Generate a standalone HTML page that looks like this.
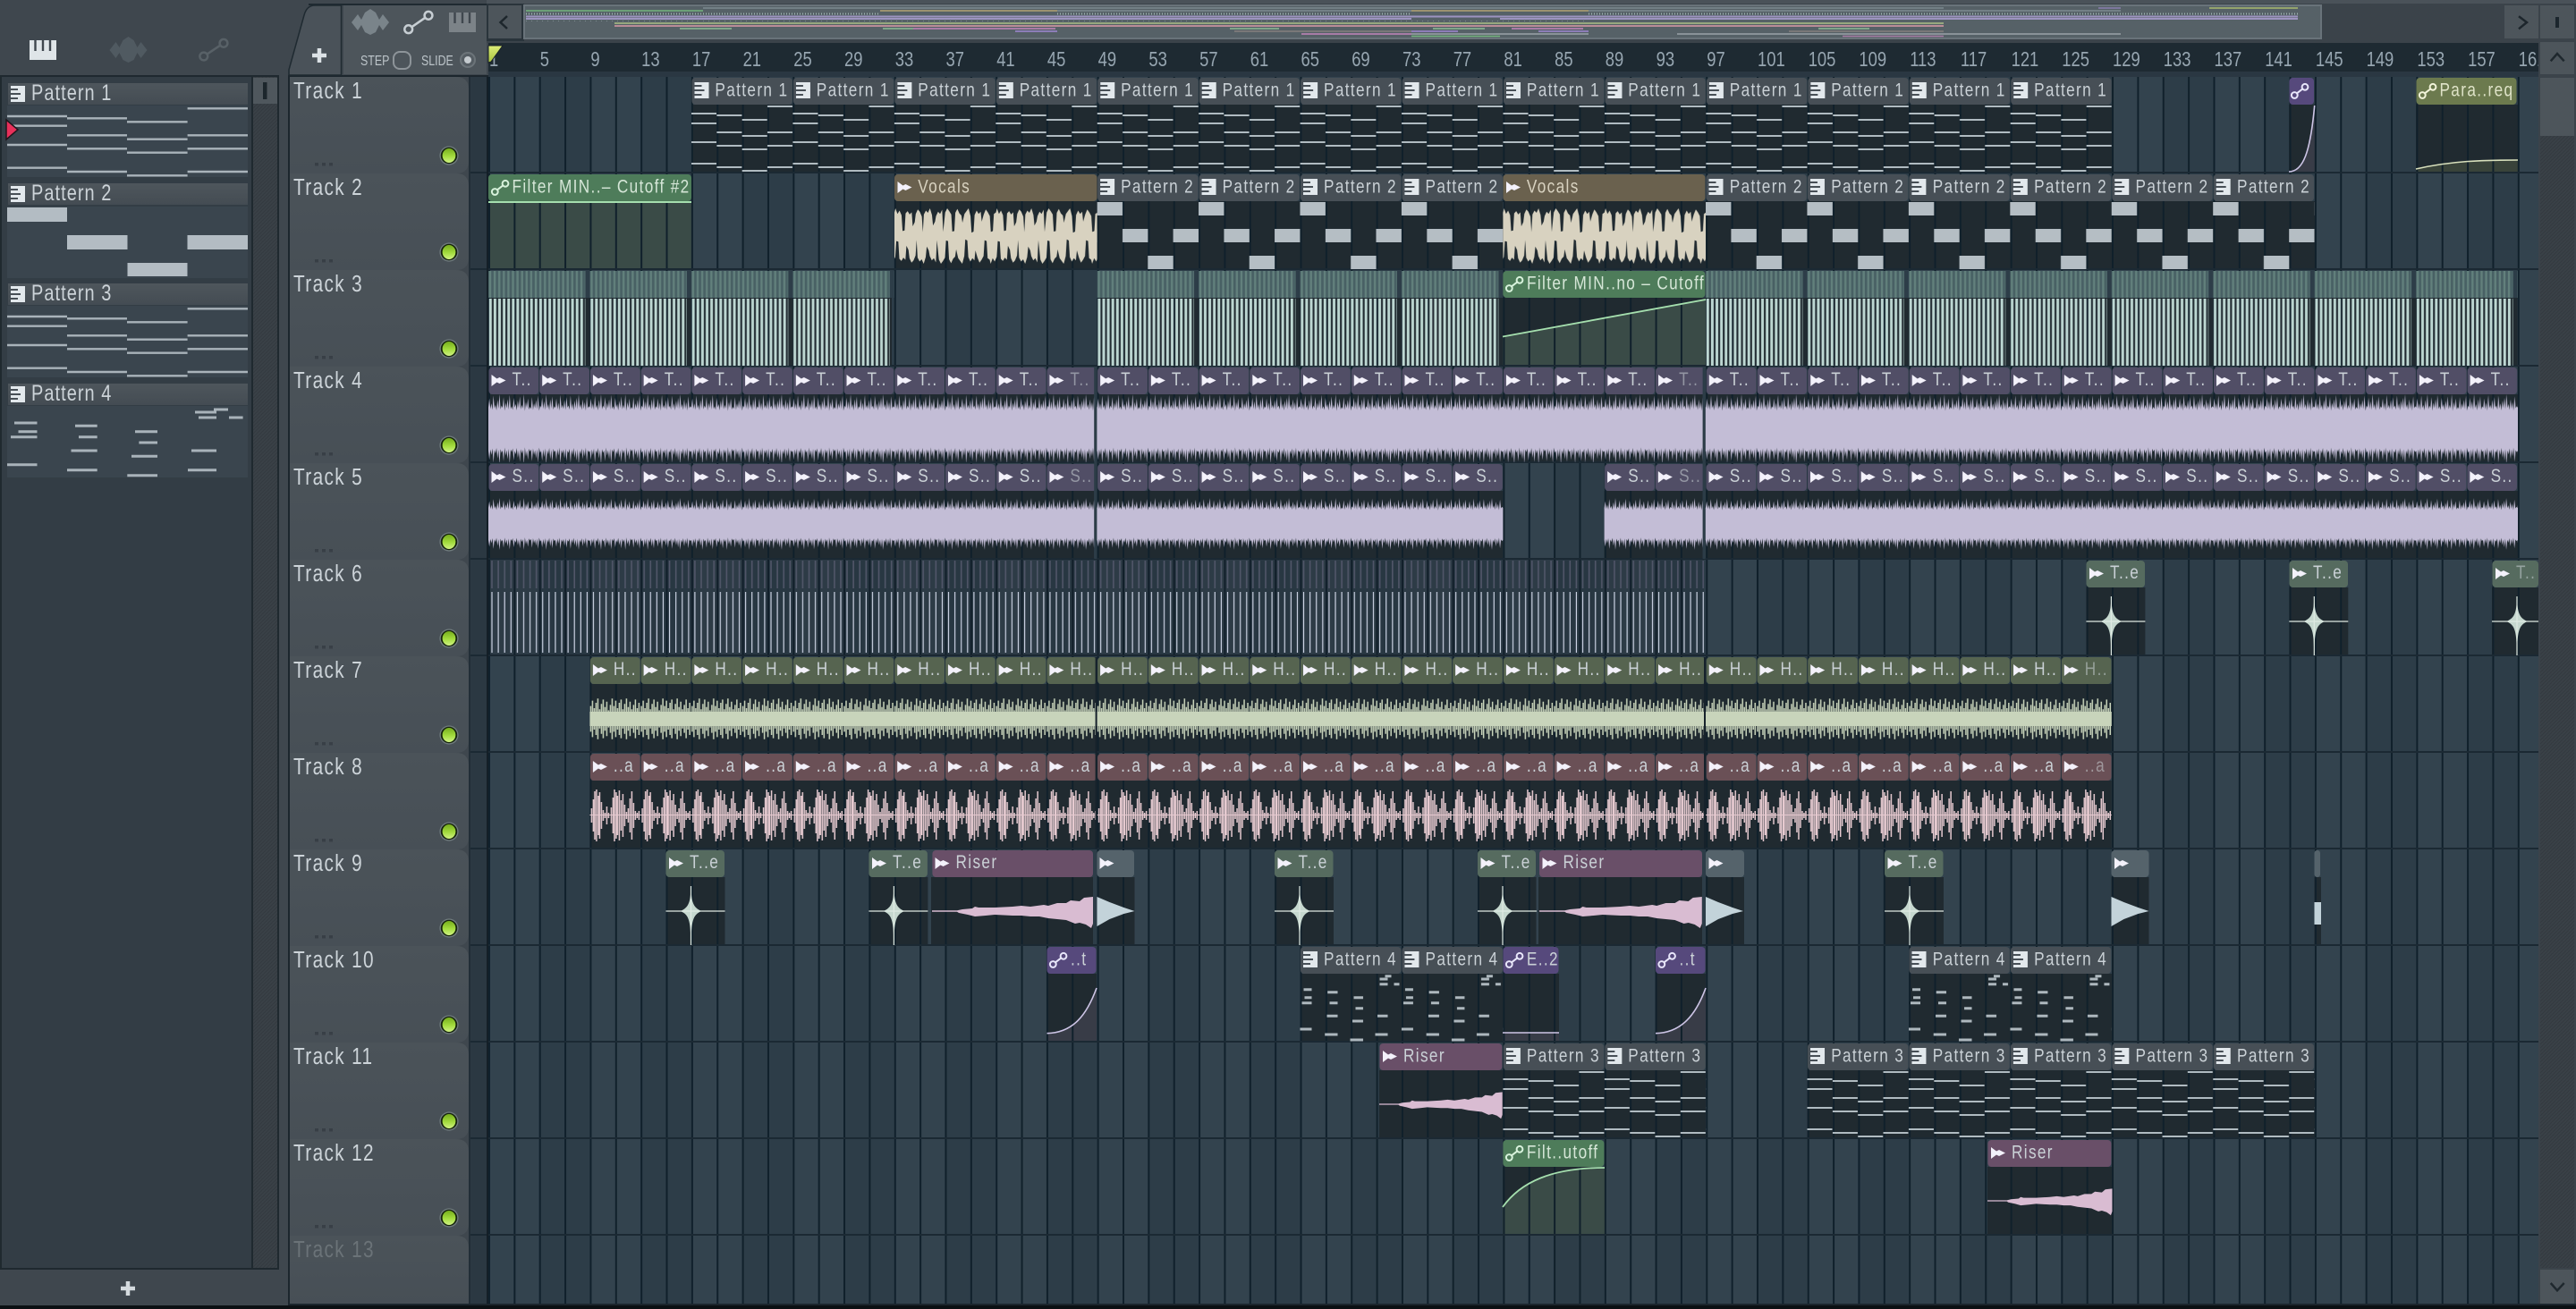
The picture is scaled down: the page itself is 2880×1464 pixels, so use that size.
<!DOCTYPE html>
<html><head><meta charset="utf-8"><title>Playlist</title>
<style>
html,body{margin:0;padding:0;background:#0d1215;width:2880px;height:1464px;overflow:hidden}
svg{display:block;position:absolute;left:0;top:0}
text{font-family:"Liberation Sans",sans-serif;transform-box:fill-box;transform-origin:0 0;transform:scaleX(.8)}
.p text{font-size:21.5px;letter-spacing:1.7px;fill:#cad1d6}
.p text.d{fill-opacity:.55}
.k text{font-size:26px;letter-spacing:1.7px;fill:#cdd4d9}
.n text{font-size:25px;letter-spacing:1.3px;fill:#ccd3d8}
.r text{font-size:23px;fill:#97a6b1}
.s text{font-size:15.5px;fill:#bcc4c9}
</style></head><body>
<svg width="2880" height="1464" viewBox="0 0 2880 1464" xmlns="http://www.w3.org/2000/svg">
<defs>
<linearGradient id="hd" x1="0" y1="0" x2="0" y2="1"><stop offset="0" stop-color="#4b5359"/><stop offset="1" stop-color="#474f56"/></linearGradient>
<linearGradient id="ph" x1="0" y1="0" x2="0" y2="1"><stop offset="0" stop-color="#4e565c"/><stop offset="1" stop-color="#444c53"/></linearGradient>
<linearGradient id="led" x1="0" y1="0" x2="0" y2="1"><stop offset="0" stop-color="#76ad1c"/><stop offset=".55" stop-color="#a3dc3e"/><stop offset="1" stop-color="#d0f283"/></linearGradient>
<linearGradient id="mk" x1="0" y1="0" x2="0" y2="1"><stop offset="0" stop-color="#dcec78"/><stop offset="1" stop-color="#a9c53e"/></linearGradient>
<pattern id="hat" width="4" height="4" patternUnits="userSpaceOnUse"><rect width="4" height="4" fill="#3a4147"/><path d="M-1 1L1-1M0 4L4 0M3 5L5 3" stroke="#33393f" stroke-width="1"/></pattern>
<pattern id="band" width="113.44" height="10" patternUnits="userSpaceOnUse"><rect width="113.44" height="10" fill="#2d3d48"/><rect width="56.72" height="10" fill="#33434e"/></pattern>
<pattern id="vl" width="28.36" height="10" patternUnits="userSpaceOnUse"><rect width="2" height="10" fill="#10202b"/></pattern>
<path id="ip" d="M0 0h16v18H0z" fill="#e2e8ec"/>
<path id="ipl" d="M0 4h8M0 9h11M0 14h8" stroke="#474f56" stroke-width="2"/>
<path id="ia" d="M0 0L6 4.5 9 3 16 6.5 9 10 6 8.5 0 13Z" fill="#f3f1fa"/>
<g id="iau" fill="none" stroke="currentColor" stroke-width="2"><circle cx="6.3" cy="19.5" r="3.4"/><circle cx="18" cy="10.3" r="3.4"/><path d="M9 17.3L15.3 12.4"/></g>
<pattern id="hP" width="113.44" height="31" patternUnits="userSpaceOnUse"><rect x=".5" width="112.4" height="30" rx="4" fill="#474f56"/><use href="#ip" x="3.5" y="5"/><use href="#ipl" x="3.5" y="5"/></pattern>
<pattern id="h4" width="56.72" height="31" patternUnits="userSpaceOnUse"><rect x=".5" width="55.7" height="30" rx="4" fill="#514e66"/><use href="#ia" x="3.5" y="8"/></pattern>
<pattern id="h7" width="56.72" height="31" patternUnits="userSpaceOnUse"><rect x=".5" width="55.7" height="30" rx="4" fill="#566450"/><use href="#ia" x="3.5" y="8"/></pattern>
<pattern id="h8" width="56.72" height="31" patternUnits="userSpaceOnUse"><rect x=".5" width="55.7" height="30" rx="4" fill="#6a5056"/><use href="#ia" x="3.5" y="8"/></pattern>
<pattern id="bP1" width="113.44" height="76" patternUnits="userSpaceOnUse"><path stroke="#b0bbc1" stroke-width="2" d="M0 10h28M0 21h28M0 42h28M0 66h28M28.4 12h28M28.4 31h28M28.4 46h28M28.4 70h28M56.7 17h28M56.7 35h28M56.7 50h28M56.7 74h28M85 2h28M85 31h28M85 46h28M85 70h28"/></pattern>
<pattern id="bP2" width="113.44" height="76" patternUnits="userSpaceOnUse"><path fill="#b5bec4" d="M0 1h28.4v15H0zM28.4 31h28.4v15H28.4zM56.7 61h28.4v15H56.7zM85 31h28.4v15H85z"/></pattern>
<pattern id="bP4" width="113.44" height="76" patternUnits="userSpaceOnUse"><path stroke="#aeb8be" stroke-width="3" d="M4 17.7H13M5 26.7H13M2 32.7H13M0 62H13M30.7 20.7H42M33 32.7H42M30 47.3H42M27.7 68H42M60 26.7H70.5M62 38.7H70.5M58.5 53H70.5M56 74H70.5M95 2.7H102M89 6H98M89 11.7H98M105 11.7H111M86.5 47.3H98M84 68H98"/></pattern>
<pattern id="st1" width="5.1" height="76" patternUnits="userSpaceOnUse"><rect x=".8" width="3" height="76" fill="#bdd7d2"/></pattern>
<pattern id="st2" width="5.1" height="30" patternUnits="userSpaceOnUse"><rect width="5.1" height="30" fill="#486064"/><rect x=".8" width="2.4" height="30" fill="#62807c"/></pattern>
<pattern id="t3b" width="113.44" height="76" patternUnits="userSpaceOnUse"><rect width="108.4" height="76" fill="url(#st1)"/></pattern>
<pattern id="t3h" width="113.44" height="30" patternUnits="userSpaceOnUse"><rect width="108.4" height="30" fill="url(#st2)"/></pattern>
<pattern id="t6" width="56.72" height="108" patternUnits="userSpaceOnUse"><path stroke="#515669" stroke-width="1.6" d="M4 1V32M11.1 1V32M18.2 1V32M25.3 1V32M32.4 1V32M39.5 1V32M46.6 1V32M53.7 1V32"/><path stroke="#ccd3e4" stroke-width="1.2" d="M4 36V104M11.1 36V104M18.2 36V104M25.3 36V104M32.4 36V104M39.5 36V104M46.6 36V104M53.7 36V104"/></pattern>
<path id="s1" d="M0 0V-62L1-88 2-58 3-74 4-55 5-96 6-60 7-70 8-54 9-84 10-59 11-100 12-57 13-68 14-61 15-92 16-53 17-76 18-60 19-86 20-56 21-98 22-58 23-66 24-55 25-90 26-62 27-72 28-54 29-82 30-60 31-94 32-57 33-70 34-59 35-100 36-52 37-78 38-61 39-88 40-56 41-64 42-58 43-92 44-55 45-74 46-60 47-84 48-57 49-96 50-53 51-68 52-62 53-90 54-58 55-80 56-55 57-100 58-60 59-72 60-54 61-86 62-59 63-94 64-56 65-66 66-61 67-88 68-57 69-76 70-53 71-98 72-60 73-70 74-58 75-84 76-55 77-92 78-62 79-68 80-56 81-96 82-59 83-74 84-54 85-82 86-60 87-90 88-57 89-100 90-61 91-72 92-55 93-86 94-58 95-78 96-53 97-94 98-60 99-66 100-62V0Z"/>
<path id="s4" d="M0 0V-85L1-100 3-80 5-92 7-75 8-18 10-20 11-82 13-90 15-78 17-86 18-35 20-50 21-80 23-96 25-88 27-70 28-14 29-78 31-92 33-84 35-100 37-76 38-38 40-52 41-72 43-88 45-80 47-95 48-15 50-85 52-100 54-90 56-78 57-16 59-18 60-84 62-98 64-82 66-74 67-48 69-80 71-90 73-100 75-72 76-12 78-16 79-76 81-92 83-80 85-88 86-52 88-78 90-96 92-86 94-72 95-15 97-18 98-80 100-85V0Z"/>
<pattern id="w4" width="113.44" height="76" patternUnits="userSpaceOnUse"><g fill="#c3bdd6"><use href="#s1" transform="translate(0,39) scale(1.1344,.39)"/><use href="#s1" transform="translate(0,39) scale(1.1344,-.39)"/></g></pattern>
<pattern id="w5" width="113.44" height="76" patternUnits="userSpaceOnUse"><g fill="#c3bdd6"><use href="#s1" transform="translate(0,37) scale(1.1344,.29)"/><use href="#s1" transform="translate(0,37) scale(1.1344,-.29)"/></g></pattern>
<pattern id="w7" width="56.72" height="76" patternUnits="userSpaceOnUse"><rect y="31" width="56.72" height="16" fill="#c8d4bb"/><path transform="translate(0,39) scale(1,1.2) translate(0,-39)" stroke="#c8d4bb" stroke-width="1.5" d="M1 27V51M3 22V56M5 29V49M7 24V54M9 20V58M11 30V48M13 25V53M15 21V57M17 28V50M19 23V55M21 31V47M23 26V52M25 20V58M27 27V51M29 22V56M31 29V49M33 24V54M35 21V57M37 30V48M39 25V53M41 20V58M43 28V50M45 23V55M47 30V48M49 26V52M51 21V57M53 29V49M55 24V54"/></pattern>
<pattern id="w8" width="56.72" height="76" patternUnits="userSpaceOnUse"><path stroke="#e2c4cb" stroke-width="1" d="M0 38.5H56.72" /><path stroke="#e6cad0" stroke-width="1.5" d="M2 31V47M4 21V57M5.6 12V66M7.5 10V68M9.5 17V61M11 13V65M13 24V54M15 33V45M17 36V42M19 29V49M21 36V42M24 30V48M26 19V59M27.6 10V68M29.5 13V65M31 17V61M33 11V67M35 22V56M37 15V63M39 27V51M41 35V43M43 31V47M45 20V58M47 12V66M49 25V53M51 34V44M53 36V42M55 34V44"/></pattern>
<pattern id="wv" width="113.44" height="76" patternUnits="userSpaceOnUse"><g fill="#d8d2c0"><use href="#s4" transform="translate(0,39) scale(1.1344,.31)"/><use href="#s4" transform="translate(-7,39) scale(1.1344,-.31)"/><use href="#s4" transform="translate(106.44,39) scale(1.1344,-.31)"/></g></pattern>
<g id="star"><path d="M0-28C.5-12 1.5-4 12 0 1.5 4 .5 12 0 38-.5 12-1.5 4-12 0-1.5-4-.5-12 0-28Z" fill="#c6d8cf"/><path d="M-28 0H38M0-28V38" stroke="#dfeae3" stroke-width="1.2"/></g>
<path id="ris" d="M0-.7H28L34-2 45-3 48-5 52-4 70-4 90-5 100-6 110-5 125-7 130-6 140-9 150-9 155-12 165-11 170-15 180-16V14L178 19 172 15 165 13 160 14 150 10 140 9 130 8 120 6 110 6 100 5 90 5 70 4 60 5 48 6 40 4 30 2 28 .7H0Z" fill="#d9bcd2"/>
<path id="tail" d="M0-16L14-10 30-4 42 0 30 3 14 9 0 17Z" fill="#c3d3da"/>
<path id="wf" d="M-21 0L-14-9-10-3-6-11 0-15 6-11 10-3 14-9 21 0 14 9 10 3 6 11 0 14-6 11-10 3-14 9Z"/>
<g id="pi"><rect width="30" height="22" fill="currentColor"/><path d="M6.5 0v12M15 0v12M23 0v12" stroke="#3f474e" stroke-width="2.4"/></g>
<g id="th"><path d="M0 0H186Q200 0 200 14V94Q200 108 186 108H0Z" fill="url(#hd)"/><rect x="28" y="96" width="4" height="3.5" fill="#383f46"/><rect x="36" y="96" width="4" height="3.5" fill="#383f46"/><rect x="44" y="96" width="4" height="3.5" fill="#383f46"/><circle cx="178" cy="88" r="10.6" fill="#6f7a7d"/><circle cx="178" cy="88" r="9.2" fill="#15230c"/><ellipse cx="178" cy="88" rx="7.4" ry="8" fill="url(#led)"/></g>
<path id="pn" stroke="#a9b3ba" stroke-width="2.4" d="M8 130H75M8 140.7H75M8 162H75M8 187.7H75M75 132.3H142M75 151.3H142M75 166.3H142M75 192H142M142 136.3H209.6M142 155.7H209.6M142 170.7H209.6M142 196.3H209.6M209.6 121.3H277M209.6 151.3H277M209.6 166.3H277M209.6 192H277"/>
</defs>

<rect width="2880" height="1464" fill="#3f474e"/>

<!-- top-right frame -->
<rect x="544" width="2336" height="4" fill="#4a5259"/>
<rect x="544" y="4" width="2336" height="44" fill="#3b434a"/>

<!-- left icons -->
<use href="#pi" x="33" y="45" style="color:#dfe5e8"/>
<use href="#wf" transform="translate(143.5,56)" fill="#505a61"/>
<g fill="none" stroke="#586167" stroke-width="2.5"><circle cx="227.8" cy="63" r="4.4"/><circle cx="250" cy="48.3" r="4.4"/><path d="M231.5 60.6L246.3 50.7"/></g>

<!-- pattern panel -->
<rect x="0" y="84" width="312" height="1336" fill="#1f292f"/>
<rect x="2" y="86" width="279" height="1332" fill="#333d45"/>
<rect x="283" y="86" width="27" height="1332" fill="url(#hat)"/>
<rect x="283" y="87" width="27" height="29" fill="#4f575d"/>
<rect x="294" y="92" width="4.5" height="19" fill="#1c262c"/>
<rect x="0" y="1420" width="322" height="40" fill="#3f474e"/>
<path d="M135 1441h16M143 1433v16" stroke="#d4dade" stroke-width="4.5"/>

<g>
<rect x="8" y="118" width="269" height="80" fill="#3a454e"/><rect x="9" y="93" width="268" height="24" fill="url(#ph)"/>
<rect x="8" y="231" width="269" height="80" fill="#3a454e"/><rect x="9" y="205" width="268" height="24" fill="url(#ph)"/>
<rect x="8" y="342" width="269" height="80" fill="#3a454e"/><rect x="9" y="317" width="268" height="24" fill="url(#ph)"/>
<rect x="8" y="454" width="269" height="80" fill="#3a454e"/><rect x="9" y="429" width="268" height="24" fill="url(#ph)"/>
<use href="#ip" x="12" y="96"/><use href="#ipl" x="12" y="96"/>
<use href="#ip" x="12" y="208"/><use href="#ipl" x="12" y="208"/>
<use href="#ip" x="12" y="320"/><use href="#ipl" x="12" y="320"/>
<use href="#ip" x="12" y="432"/><use href="#ipl" x="12" y="432"/>
</g>
<g class="n"><text x="35" y="112">Pattern 1</text><text x="35" y="224">Pattern 2</text><text x="35" y="336">Pattern 3</text><text x="35" y="448">Pattern 4</text></g>
<use href="#pn"/><use href="#pn" y="224"/>
<path fill="#b3bcc3" d="M8 232h67v16H8zM75 263h67.5v16H75zM142.5 294h67v15h-67zM209.5 263h67.5v16h-67.5z"/>
<path stroke="#a9b3ba" stroke-width="3" d="M16 473H41.5M20.5 482.7H41.5M12 488.7H41.5M8 519.7H41.5M84 476.3H108.7M88 488.7H108.7M79.5 504H108.7M75 525.7H108.7M151 482.7H176M155.4 495H176M147 510.3H176M142.3 531.7H176M239 458H255M218 461H242M222 467H242M256 467H271.6M214 504H242M210 525.7H242"/>
<path d="M7 134L20 145 7 156Z" fill="#e8305a" stroke="#20161c" stroke-width="1.5"/>

<!-- grid -->
<rect x="526" y="86" width="20" height="1374" fill="#2b3842"/>
<g transform="translate(546,0)"><rect y="86" width="2292" height="1372" fill="url(#band)"/></g>

<!-- dark clip bodies -->
<path fill="#202a30" d="M773 117h1588v76H773zM2559 117h28.7v76H2559zM2701 117h114v76H2701zM1000 225h1588v76H1000zM546 333h451v76H546zM1226.6 333h1588v76H1226.6zM546 441h677v76H546zM1226.6 441h677v76H1226.6zM1907 441h908v76H1907zM546 549h677v76H546zM1226.6 549h453.6v76H1226.6zM1793.6 549h110v76H1793.6zM1907 549h908v76H1907zM2332.4 657h66v76H2332.4zM2559.3 657h66v76H2559.3zM2786 657h52v76H2786zM659.4 765h1701.4v76H659.4zM659.4 873h1701.4v76H659.4zM744.5 981h66v76H744.5zM971.4 981h66v76H971.4zM1041 981h181v76H1041zM1226.5 981h42v76H1226.5zM1425 981h66v76H1425zM1652 981h65.5v76H1652zM1720 981h183v76H1720zM1907 981h43v76H1907zM2107 981h66v76H2107zM2360.5 981h42v76H2360.5zM2587.5 981h7.5v76H2587.5zM1170.5 1089h55.5v76H1170.5zM1453.5 1089h289.5v76H1453.5zM1851 1089h56v76H1851zM2134 1089h227v76H2134zM1542 1197h365v76H1542zM2020.5 1197h567.5v76H2020.5zM1680 1305h114v76H1680zM2222 1305h139v76H2222z"/>
<!-- automation fills -->
<rect x="546" y="226" width="227" height="75" fill="#3a4b47"/>
<path d="M1680 376.5L1907 335V409H1680Z" fill="#3a4b47"/>
<path d="M1680 1350C1700 1322 1735 1306 1794 1306V1381H1680Z" fill="#3a4b47"/>
<path d="M2701 189C2740 180 2775 179 2815 179V193H2701Z" fill="#39433a"/>
<path d="M2559 192C2575 192 2583 170 2587.7 118V193H2559Z" fill="#383c47"/>
<path d="M1170.5 1155.7C1200 1155 1215 1135 1226 1105V1165H1170.5Z" fill="#383c47"/>
<path d="M1851 1155.7C1880 1155 1896 1135 1907 1105V1165H1851Z" fill="#383c47"/>
<rect x="1680" y="1155" width="63" height="10" fill="#383c47"/>

<!-- lines -->
<g transform="translate(546,0)"><rect y="86" width="2292" height="1372" fill="url(#vl)"/></g>
<path stroke="#1b2933" stroke-width="2" d="M526 193H2838M526 301H2838M526 409H2838M526 517H2838M526 625H2838M526 733H2838M526 841H2838M526 949H2838M526 1057H2838M526 1165H2838M526 1273H2838M526 1381H2838"/>
<rect x="544" y="86" width="2" height="1374" fill="#141f27"/>

<!-- track 1 -->
<rect transform="translate(773,117)" width="1588" height="76" fill="url(#bP1)"/>
<rect transform="translate(773,87)" width="1588" height="31" fill="url(#hP)"/>
<path d="M2559 192C2575 192 2583 170 2587.7 118" fill="none" stroke="#cdc5e6" stroke-width="1.6"/>
<rect x="2559.5" y="87" width="27.5" height="30" rx="4" fill="#56497c"/><use href="#iau" x="2559" y="87" style="color:#e8e6fa"/>
<path d="M2701 189C2740 180 2775 179 2815 179" fill="none" stroke="#d8e0bc" stroke-width="1.6"/>
<rect x="2701.5" y="87" width="112" height="30" rx="4" fill="#6c7a4e"/><use href="#iau" x="2702" y="87" style="color:#f2f4da"/>

<!-- track 2 -->
<rect x="546" y="195" width="227" height="30" rx="4" fill="#4e7c5a"/><use href="#iau" x="547" y="195" style="color:#d8f2dc"/>
<rect x="546" y="225" width="227" height="2" fill="#a5dfae"/>
<rect x="1000" y="195" width="226.5" height="30" rx="4" fill="#6a614e"/><use href="#ia" x="1003.5" y="203"/>
<rect x="1680.4" y="195" width="226" height="30" rx="4" fill="#6a614e"/><use href="#ia" x="1684" y="203"/>
<rect transform="translate(1000,225)" width="226.6" height="76" fill="url(#wv)"/>
<rect transform="translate(1680.4,225)" width="226.6" height="76" fill="url(#wv)"/>
<rect transform="translate(1226.6,225)" width="453.8" height="76" fill="url(#bP2)"/>
<rect transform="translate(1907,225)" width="680.7" height="76" fill="url(#bP2)"/>
<rect transform="translate(1226.6,195)" width="453.8" height="31" fill="url(#hP)"/>
<rect transform="translate(1907,195)" width="680.7" height="31" fill="url(#hP)"/>

<!-- track 3 -->
<rect transform="translate(546,334)" width="454" height="75" fill="url(#t3b)"/>
<rect transform="translate(1226.6,334)" width="453.8" height="75" fill="url(#t3b)"/>
<rect transform="translate(1907,334)" width="908" height="75" fill="url(#t3b)"/>
<rect transform="translate(546,303)" width="454" height="30" fill="url(#t3h)"/>
<rect transform="translate(1226.6,303)" width="453.8" height="30" fill="url(#t3h)"/>
<rect transform="translate(1907,303)" width="908" height="30" fill="url(#t3h)"/>
<rect x="1680.4" y="303" width="226" height="30" rx="4" fill="#4e7c5a"/><use href="#iau" x="1681" y="303" style="color:#d8f2dc"/>
<path d="M1680 376.5L1907 335" stroke="#a5dfae" stroke-width="1.8"/>

<!-- track 4 / 5 -->
<rect transform="translate(546,441)" width="2269" height="76" fill="url(#w4)"/>
<rect transform="translate(546,411)" width="2269" height="31" fill="url(#h4)"/>
<rect transform="translate(546,549)" width="1134.4" height="76" fill="url(#w5)"/>
<rect transform="translate(546,519)" width="1134.4" height="31" fill="url(#h4)"/>
<rect transform="translate(1793.6,549)" width="1021.4" height="76" fill="url(#w5)"/>
<g transform="translate(1793.6,519)"><rect width="1021.4" height="31" fill="url(#h4)"/></g>
<path fill="#2c3c47" d="M1223.2 411h3.2v214h-3.2zM1903.6 411h3.2v214h-3.2z"/>

<!-- track 6 -->
<rect x="546" y="626" width="1359" height="107" fill="#141e28" fill-opacity=".18"/>
<rect transform="translate(546,626)" width="1359" height="108" fill="url(#t6)"/>
<g fill="#566b5f"><rect x="2332.5" y="627" width="65.5" height="30" rx="4"/><rect x="2559.5" y="627" width="65.5" height="30" rx="4"/><rect x="2786.5" y="627" width="51.5" height="30" rx="4"/></g>
<use href="#ia" x="2336" y="635"/><use href="#ia" x="2563" y="635"/><use href="#ia" x="2790" y="635"/>
<use href="#star" x="2360.4" y="695"/><use href="#star" x="2587.3" y="695"/>
<g><path d="M2814 667C2814.5 683 2815.5 691 2826 695 2815.5 699 2814.5 707 2814 733 2813.5 707 2812.5 699 2802 695 2812.5 691 2813.5 683 2814 667Z" fill="#c6d8cf"/><path d="M2786 695H2838M2814 667V733" stroke="#dfeae3" stroke-width="1.2"/></g>

<!-- track 7 / 8 -->
<rect transform="translate(659.4,765)" width="1701.4" height="76" fill="url(#w7)"/>
<rect transform="translate(659.4,735)" width="1701.4" height="31" fill="url(#h7)"/>
<rect transform="translate(659.4,873)" width="1701.4" height="76" fill="url(#w8)"/>
<rect transform="translate(659.4,843)" width="1701.4" height="31" fill="url(#h8)"/>
<path fill="#16222b" d="M1224.6 735h2v214h-2zM1905 735h2v214h-2z"/>

<!-- track 9 -->
<g fill="#566b5f"><rect x="744.5" y="951" width="65.5" height="30" rx="4"/><rect x="971.4" y="951" width="65.5" height="30" rx="4"/><rect x="1425" y="951" width="65.5" height="30" rx="4"/><rect x="1652" y="951" width="65" height="30" rx="4"/><rect x="2107" y="951" width="65.5" height="30" rx="4"/></g>
<g fill="#694f68"><rect x="1042.4" y="951" width="179.6" height="30" rx="4"/><rect x="1721" y="951" width="182" height="30" rx="4"/></g>
<g fill="#55636b"><rect x="1226.5" y="951" width="41.5" height="30" rx="4"/><rect x="1907" y="951" width="43" height="30" rx="4"/><rect x="2360.5" y="951" width="42" height="30" rx="4"/><rect x="2587.5" y="951" width="6.5" height="30" rx="3"/></g>
<use href="#ia" x="748" y="959"/><use href="#ia" x="975" y="959"/><use href="#ia" x="1045.5" y="959"/><use href="#ia" x="1229.5" y="959"/><use href="#ia" x="1428.5" y="959"/><use href="#ia" x="1655.5" y="959"/><use href="#ia" x="1724.5" y="959"/><use href="#ia" x="1910.5" y="959"/><use href="#ia" x="2110.5" y="959"/><use href="#ia" x="2364" y="959"/>
<use href="#star" x="772.5" y="1019"/><use href="#star" x="999.4" y="1019"/><use href="#star" x="1453" y="1019"/><use href="#star" x="1680" y="1019"/><use href="#star" x="2135" y="1019"/>
<use href="#ris" transform="translate(1042,1019)"/><use href="#ris" transform="translate(1721,1019) scale(1.01,1)"/>
<use href="#tail" x="1226.5" y="1019"/><use href="#tail" x="1907" y="1019"/><use href="#tail" x="2360.5" y="1019"/>
<rect x="2587.5" y="1009" width="7.5" height="25" fill="#c3d3da"/>

<!-- track 10 -->
<rect transform="translate(1453.5,1089)" width="226.9" height="76" fill="url(#bP4)"/>
<rect transform="translate(2134,1089)" width="226.9" height="76" fill="url(#bP4)"/>
<rect transform="translate(1453.5,1059)" width="226.9" height="31" fill="url(#hP)"/>
<rect transform="translate(2134,1059)" width="226.9" height="31" fill="url(#hP)"/>
<g fill="#56497c"><rect x="1170.5" y="1059" width="55" height="30" rx="4"/><rect x="1680.5" y="1059" width="62" height="30" rx="4"/><rect x="1851" y="1059" width="55.5" height="30" rx="4"/></g>
<use href="#iau" x="1171" y="1059" style="color:#e8e6fa"/><use href="#iau" x="1681" y="1059" style="color:#e8e6fa"/><use href="#iau" x="1851.5" y="1059" style="color:#e8e6fa"/>
<g fill="none" stroke="#cdc5e6" stroke-width="1.6"><path d="M1170.5 1155.7C1200 1155 1215 1135 1226 1105"/><path d="M1851 1155.7C1880 1155 1896 1135 1907 1105"/><path d="M1680 1155H1743"/></g>

<!-- track 11 -->
<rect transform="translate(1680.4,1197)" width="226.8" height="76" fill="url(#bP1)"/>
<rect transform="translate(2020.5,1197)" width="567.2" height="76" fill="url(#bP1)"/>
<rect transform="translate(1680.4,1167)" width="226.8" height="31" fill="url(#hP)"/>
<rect transform="translate(2020.5,1167)" width="567.2" height="31" fill="url(#hP)"/>
<rect x="1542.4" y="1167" width="137" height="30" rx="4" fill="#694f68"/><use href="#ia" x="1546" y="1175"/>
<use href="#ris" transform="translate(1542,1235) scale(.765,.85)"/>

<!-- track 12 -->
<rect x="1680.4" y="1275" width="113" height="30" rx="4" fill="#4e7c5a"/><use href="#iau" x="1681" y="1275" style="color:#d8f2dc"/>
<path d="M1680 1350C1700 1322 1735 1306 1794 1306" fill="none" stroke="#a5dfae" stroke-width="1.8"/>
<rect x="2222.4" y="1275" width="138" height="30" rx="4" fill="#694f68"/><use href="#ia" x="2226" y="1283"/>
<use href="#ris" transform="translate(2222,1343) scale(.775,.85)"/>

<!-- clip labels -->
<g class="p">
<g transform="translate(0,107.5)"><text x="799.4">Pattern 1</text><text x="912.8">Pattern 1</text><text x="1026.3">Pattern 1</text><text x="1139.7">Pattern 1</text><text x="1253.1">Pattern 1</text><text x="1366.6">Pattern 1</text><text x="1480">Pattern 1</text><text x="1593.5">Pattern 1</text><text x="1706.9">Pattern 1</text><text x="1820.3">Pattern 1</text><text x="1933.8">Pattern 1</text><text x="2047.2">Pattern 1</text><text x="2160.7">Pattern 1</text><text x="2274.1">Pattern 1</text><text x="2727.5" style="fill:#dfe3c8">Para..req</text></g>
<g transform="translate(0,215.5)"><text x="572.5" style="fill:#d5e6d7">Filter MIN..– Cutoff #2</text><text x="1026.3" style="fill:#d8d2c0">Vocals</text><text x="1253.1">Pattern 2</text><text x="1366.6">Pattern 2</text><text x="1480">Pattern 2</text><text x="1593.5">Pattern 2</text><text x="1706.9" style="fill:#d8d2c0">Vocals</text><text x="1933.8">Pattern 2</text><text x="2047.2">Pattern 2</text><text x="2160.7">Pattern 2</text><text x="2274.1">Pattern 2</text><text x="2387.5">Pattern 2</text><text x="2501">Pattern 2</text></g>
<g transform="translate(0,323.5)"><text x="1707" style="fill:#d5e6d7">Filter MIN..no – Cutoff</text></g>
<g transform="translate(0,431)"><text x="572.5">T..</text><text x="629.2">T..</text><text x="685.9">T..</text><text x="742.7">T..</text><text x="799.4">T..</text><text x="856.1">T..</text><text x="912.8">T..</text><text x="969.5">T..</text><text x="1026.3">T..</text><text x="1083">T..</text><text x="1139.7">T..</text><text x="1196.4" class="d">T..</text><text x="1253.1">T..</text><text x="1309.9">T..</text><text x="1366.6">T..</text><text x="1423.3">T..</text><text x="1480">T..</text><text x="1536.7">T..</text><text x="1593.5">T..</text><text x="1650.2">T..</text><text x="1706.9">T..</text><text x="1763.6">T..</text><text x="1820.3">T..</text><text x="1877.1" class="d">T..</text><text x="1933.8">T..</text><text x="1990.5">T..</text><text x="2047.2">T..</text><text x="2103.9">T..</text><text x="2160.7">T..</text><text x="2217.4">T..</text><text x="2274.1">T..</text><text x="2330.8">T..</text><text x="2387.5">T..</text><text x="2444.3">T..</text><text x="2501">T..</text><text x="2557.7">T..</text><text x="2614.4">T..</text><text x="2671.1">T..</text><text x="2727.9">T..</text><text x="2784.6">T..</text></g>
<g transform="translate(0,539)"><text x="572.5">S..</text><text x="629.2">S..</text><text x="685.9">S..</text><text x="742.7">S..</text><text x="799.4">S..</text><text x="856.1">S..</text><text x="912.8">S..</text><text x="969.5">S..</text><text x="1026.3">S..</text><text x="1083">S..</text><text x="1139.7">S..</text><text x="1196.4" class="d">S..</text><text x="1253.1">S..</text><text x="1309.9">S..</text><text x="1366.6">S..</text><text x="1423.3">S..</text><text x="1480">S..</text><text x="1536.7">S..</text><text x="1593.5">S..</text><text x="1650.2">S..</text><text x="1820.3">S..</text><text x="1877.1" class="d">S..</text><text x="1933.8">S..</text><text x="1990.5">S..</text><text x="2047.2">S..</text><text x="2103.9">S..</text><text x="2160.7">S..</text><text x="2217.4">S..</text><text x="2274.1">S..</text><text x="2330.8">S..</text><text x="2387.5">S..</text><text x="2444.3">S..</text><text x="2501">S..</text><text x="2557.7">S..</text><text x="2614.4">S..</text><text x="2671.1">S..</text><text x="2727.9">S..</text><text x="2784.6">S..</text></g>
<g transform="translate(0,647)"><text x="2359">T..e</text><text x="2586">T..e</text><text x="2813" class="d">T..</text></g>
<g transform="translate(0,755)"><text x="685.9">H..</text><text x="742.7">H..</text><text x="799.4">H..</text><text x="856.1">H..</text><text x="912.8">H..</text><text x="969.5">H..</text><text x="1026.3">H..</text><text x="1083">H..</text><text x="1139.7">H..</text><text x="1196.4">H..</text><text x="1253.1">H..</text><text x="1309.9">H..</text><text x="1366.6">H..</text><text x="1423.3">H..</text><text x="1480">H..</text><text x="1536.7">H..</text><text x="1593.5">H..</text><text x="1650.2">H..</text><text x="1706.9">H..</text><text x="1763.6">H..</text><text x="1820.3">H..</text><text x="1877.1">H..</text><text x="1933.8">H..</text><text x="1990.5">H..</text><text x="2047.2">H..</text><text x="2103.9">H..</text><text x="2160.7">H..</text><text x="2217.4">H..</text><text x="2274.1">H..</text><text x="2330.8" class="d">H..</text></g>
<g transform="translate(0,863)"><text x="685.9">..a</text><text x="742.7">..a</text><text x="799.4">..a</text><text x="856.1">..a</text><text x="912.8">..a</text><text x="969.5">..a</text><text x="1026.3">..a</text><text x="1083">..a</text><text x="1139.7">..a</text><text x="1196.4">..a</text><text x="1253.1">..a</text><text x="1309.9">..a</text><text x="1366.6">..a</text><text x="1423.3">..a</text><text x="1480">..a</text><text x="1536.7">..a</text><text x="1593.5">..a</text><text x="1650.2">..a</text><text x="1706.9">..a</text><text x="1763.6">..a</text><text x="1820.3">..a</text><text x="1877.1">..a</text><text x="1933.8">..a</text><text x="1990.5">..a</text><text x="2047.2">..a</text><text x="2103.9">..a</text><text x="2160.7">..a</text><text x="2217.4">..a</text><text x="2274.1">..a</text><text x="2330.8" class="d">..a</text></g>
<g transform="translate(0,971)"><text x="771">T..e</text><text x="998">T..e</text><text x="1068.5">Riser</text><text x="1451.5">T..e</text><text x="1678.5">T..e</text><text x="1747.5">Riser</text><text x="2133.5">T..e</text></g>
<g transform="translate(0,1079.5)"><text x="1197">..t</text><text x="1480">Pattern 4</text><text x="1593.5">Pattern 4</text><text x="1706.9">E..2</text><text x="1877.5">..t</text><text x="2160.7">Pattern 4</text><text x="2274.1">Pattern 4</text></g>
<g transform="translate(0,1187.5)"><text x="1569">Riser</text><text x="1706.9">Pattern 3</text><text x="1820.3">Pattern 3</text><text x="2047.2">Pattern 3</text><text x="2160.7">Pattern 3</text><text x="2274.1">Pattern 3</text><text x="2387.5">Pattern 3</text><text x="2501">Pattern 3</text></g>
<g transform="translate(0,1295.5)"><text x="1706.9" style="fill:#d5e6d7">Filt..utoff</text><text x="2249">Riser</text></g>
</g>

<!-- track headers -->
<rect x="322" y="86" width="2" height="1374" fill="#1c262d"/>
<rect x="524" y="86" width="2" height="1374" fill="#222e37"/>
<use href="#th" x="324" y="86"/><use href="#th" x="324" y="194"/><use href="#th" x="324" y="302"/><use href="#th" x="324" y="410"/><use href="#th" x="324" y="518"/><use href="#th" x="324" y="626"/><use href="#th" x="324" y="734"/><use href="#th" x="324" y="842"/><use href="#th" x="324" y="950"/><use href="#th" x="324" y="1058"/><use href="#th" x="324" y="1166"/><use href="#th" x="324" y="1274"/>
<path d="M324 1382H510Q524 1382 524 1396V1458H324Z" fill="url(#hd)"/>
<g class="k"><text x="328" y="110">Track 1</text><text x="328" y="218">Track 2</text><text x="328" y="326">Track 3</text><text x="328" y="434">Track 4</text><text x="328" y="542">Track 5</text><text x="328" y="650">Track 6</text><text x="328" y="758">Track 7</text><text x="328" y="866">Track 8</text><text x="328" y="974">Track 9</text><text x="328" y="1082">Track 10</text><text x="328" y="1190">Track 11</text><text x="328" y="1298">Track 12</text><text x="328" y="1406" style="fill:#6b7378">Track 13</text></g>

<!-- add tab + tools -->
<rect x="322" y="84" width="224" height="2" fill="#1c262d"/>
<path d="M323 84V78L340 17Q343 6 352 6H381.5V84Z" fill="#4a5259" stroke="#1f2a31" stroke-width="1.5"/>
<path d="M349 62h16M357 54v16" stroke="#dce2e6" stroke-width="4.5"/>
<rect x="345" y="4" width="201" height="2" fill="#1f2a31"/>
<rect x="384" y="6" width="160" height="77" fill="#4d555b"/>
<use href="#wf" transform="translate(414,25)" fill="#7a848a"/>
<g fill="none" stroke="#c7ced3" stroke-width="2.5"><circle cx="456.7" cy="32.7" r="4.4"/><circle cx="479" cy="17.3" r="4.4"/><path d="M460.4 30.2L475.3 19.8"/></g>
<use href="#pi" x="502" y="14" style="color:#7c8388"/>
<g class="s"><text x="403" y="73">STEP</text><text x="471" y="73">SLIDE</text></g>
<rect x="440" y="58" width="19" height="19" rx="7" fill="none" stroke="#8d9499" stroke-width="2"/>
<circle cx="523" cy="67" r="8" fill="#555d63" stroke="#6c7479" stroke-width="2"/><circle cx="523" cy="67" r="4" fill="#c4cace"/>

<!-- top buttons + overview -->
<rect x="544" y="4" width="42" height="42" fill="#2a343b"/>
<rect x="546" y="6" width="37" height="37" fill="#4d555b"/>
<path d="M567 18L559.5 25 567 32" fill="none" stroke="#1d262c" stroke-width="2.5"/>
<rect x="586" y="6" width="2009" height="37" fill="#566167" stroke="#69737a" stroke-width="2"/>
<g fill="none" stroke-width="1.4">
<path stroke="#7d8a90" d="M786 9H2173"/><path stroke="#8a7fb0" d="M2346 9H2371"/><path stroke="#a9bb6e" d="M2470 9H2569"/>
<path stroke="#74b67f" d="M588 12H786"/><path stroke="#b4a272" d="M984 12H1182M1578 12H1776"/><path stroke="#7d8a90" d="M1182 12H1578M1776 12H2371"/>
<path stroke="#9db3b1" stroke-width="2" stroke-dasharray="1 2" d="M588 15.5H984M1182 15.5H1578M1776 15.5H2569"/>
<path stroke="#9d94c0" stroke-width="2" d="M588 18.5H2569"/><path stroke="#9d94c0" stroke-width="2" d="M588 21H1578M1677 21H2569"/>
<path stroke="#7d8a90" stroke-width="1" stroke-dasharray="1 5" d="M588 23.5H1776"/><path stroke="#96a87e" stroke-width="2" d="M687 26H2173"/><path stroke="#ba8c97" stroke-width="2" d="M687 29H2173"/>
<path stroke="#7fa68a" stroke-width="2" d="M760 32H818M987 32H1040M1375 32H1430M1602 32H1660M2033 32H2090"/><path stroke="#a87ca6" stroke-width="2" d="M1021 32H1180M1690 32H1770"/>
<path stroke="#85807f" stroke-width="1.5" d="M1380 35H1578M2000 35H2173"/><path stroke="#8d7db8" stroke-width="2" d="M1135 35H1182M1578 35H1630M1720 35H1776"/>
<path stroke="#9aa3a8" stroke-width="1.5" d="M1578 38H1776M1875 38H2371"/><path stroke="#a87ca6" stroke-width="2" d="M1455 38H1578"/>
<path stroke="#74b67f" stroke-width="1.5" d="M1578 40.5H1677"/><path stroke="#a87ca6" stroke-width="1.5" d="M2060 40.5H2173"/>
</g>
<rect x="2800" y="6" width="38" height="37" fill="#4d555b"/>
<path d="M2816 18.3L2825 25 2816 32.3" fill="none" stroke="#1d262c" stroke-width="2.5"/>

<!-- ruler -->
<rect x="546" y="48" width="2292" height="32" fill="#1e2a32"/>
<rect x="546" y="80" width="2292" height="6" fill="#2a3742"/>
<g class="r" transform="translate(0,74)"><text x="547">1</text><text x="603.7">5</text><text x="660.4">9</text><text x="717.2">13</text><text x="773.9">17</text><text x="830.6">21</text><text x="887.3">25</text><text x="944">29</text><text x="1000.8">33</text><text x="1057.5">37</text><text x="1114.2">41</text><text x="1170.9">45</text><text x="1227.6">49</text><text x="1284.4">53</text><text x="1341.1">57</text><text x="1397.8">61</text><text x="1454.5">65</text><text x="1511.2">69</text><text x="1568">73</text><text x="1624.7">77</text><text x="1681.4">81</text><text x="1738.1">85</text><text x="1794.8">89</text><text x="1851.6">93</text><text x="1908.3">97</text><text x="1965">101</text><text x="2021.7">105</text><text x="2078.4">109</text><text x="2135.2">113</text><text x="2191.9">117</text><text x="2248.6">121</text><text x="2305.3">125</text><text x="2362">129</text><text x="2418.8">133</text><text x="2475.5">137</text><text x="2532.2">141</text><text x="2588.9">145</text><text x="2645.6">149</text><text x="2702.4">153</text><text x="2759.1">157</text><text x="2815.8">161</text></g>
<path d="M546 51H562L549 69 546 70Z" fill="url(#mk)" stroke="#1a2228" stroke-width="1"/>

<!-- right scrollbar -->
<rect x="2838" y="0" width="42" height="1464" fill="#3b434a"/>
<rect x="2838" y="0" width="42" height="4" fill="#4a5259"/>
<rect x="2840" y="6" width="38" height="37" fill="#4d555b"/>
<rect x="2857" y="19" width="4" height="12" fill="#1c262d"/>
<rect x="2840" y="47" width="38" height="36" fill="#4d555b"/>
<path d="M2851.7 68.3L2859 60 2866.7 68.3" fill="none" stroke="#1f282e" stroke-width="2.5"/>
<rect x="2840" y="87" width="38" height="1331" fill="url(#hat)"/>
<rect x="2840" y="87" width="38" height="65" fill="#4d555b"/>
<rect x="2840" y="1420" width="38" height="38" fill="#4d555b"/>
<path d="M2851.7 1435L2859 1443.3 2866.7 1435" fill="none" stroke="#1f282e" stroke-width="2.5"/>

<!-- bottom -->
<rect x="322" y="1458" width="2558" height="2" fill="#1c262d"/>
<rect x="0" y="1460" width="2880" height="4" fill="#0b1013"/>
</svg>
</body></html>
